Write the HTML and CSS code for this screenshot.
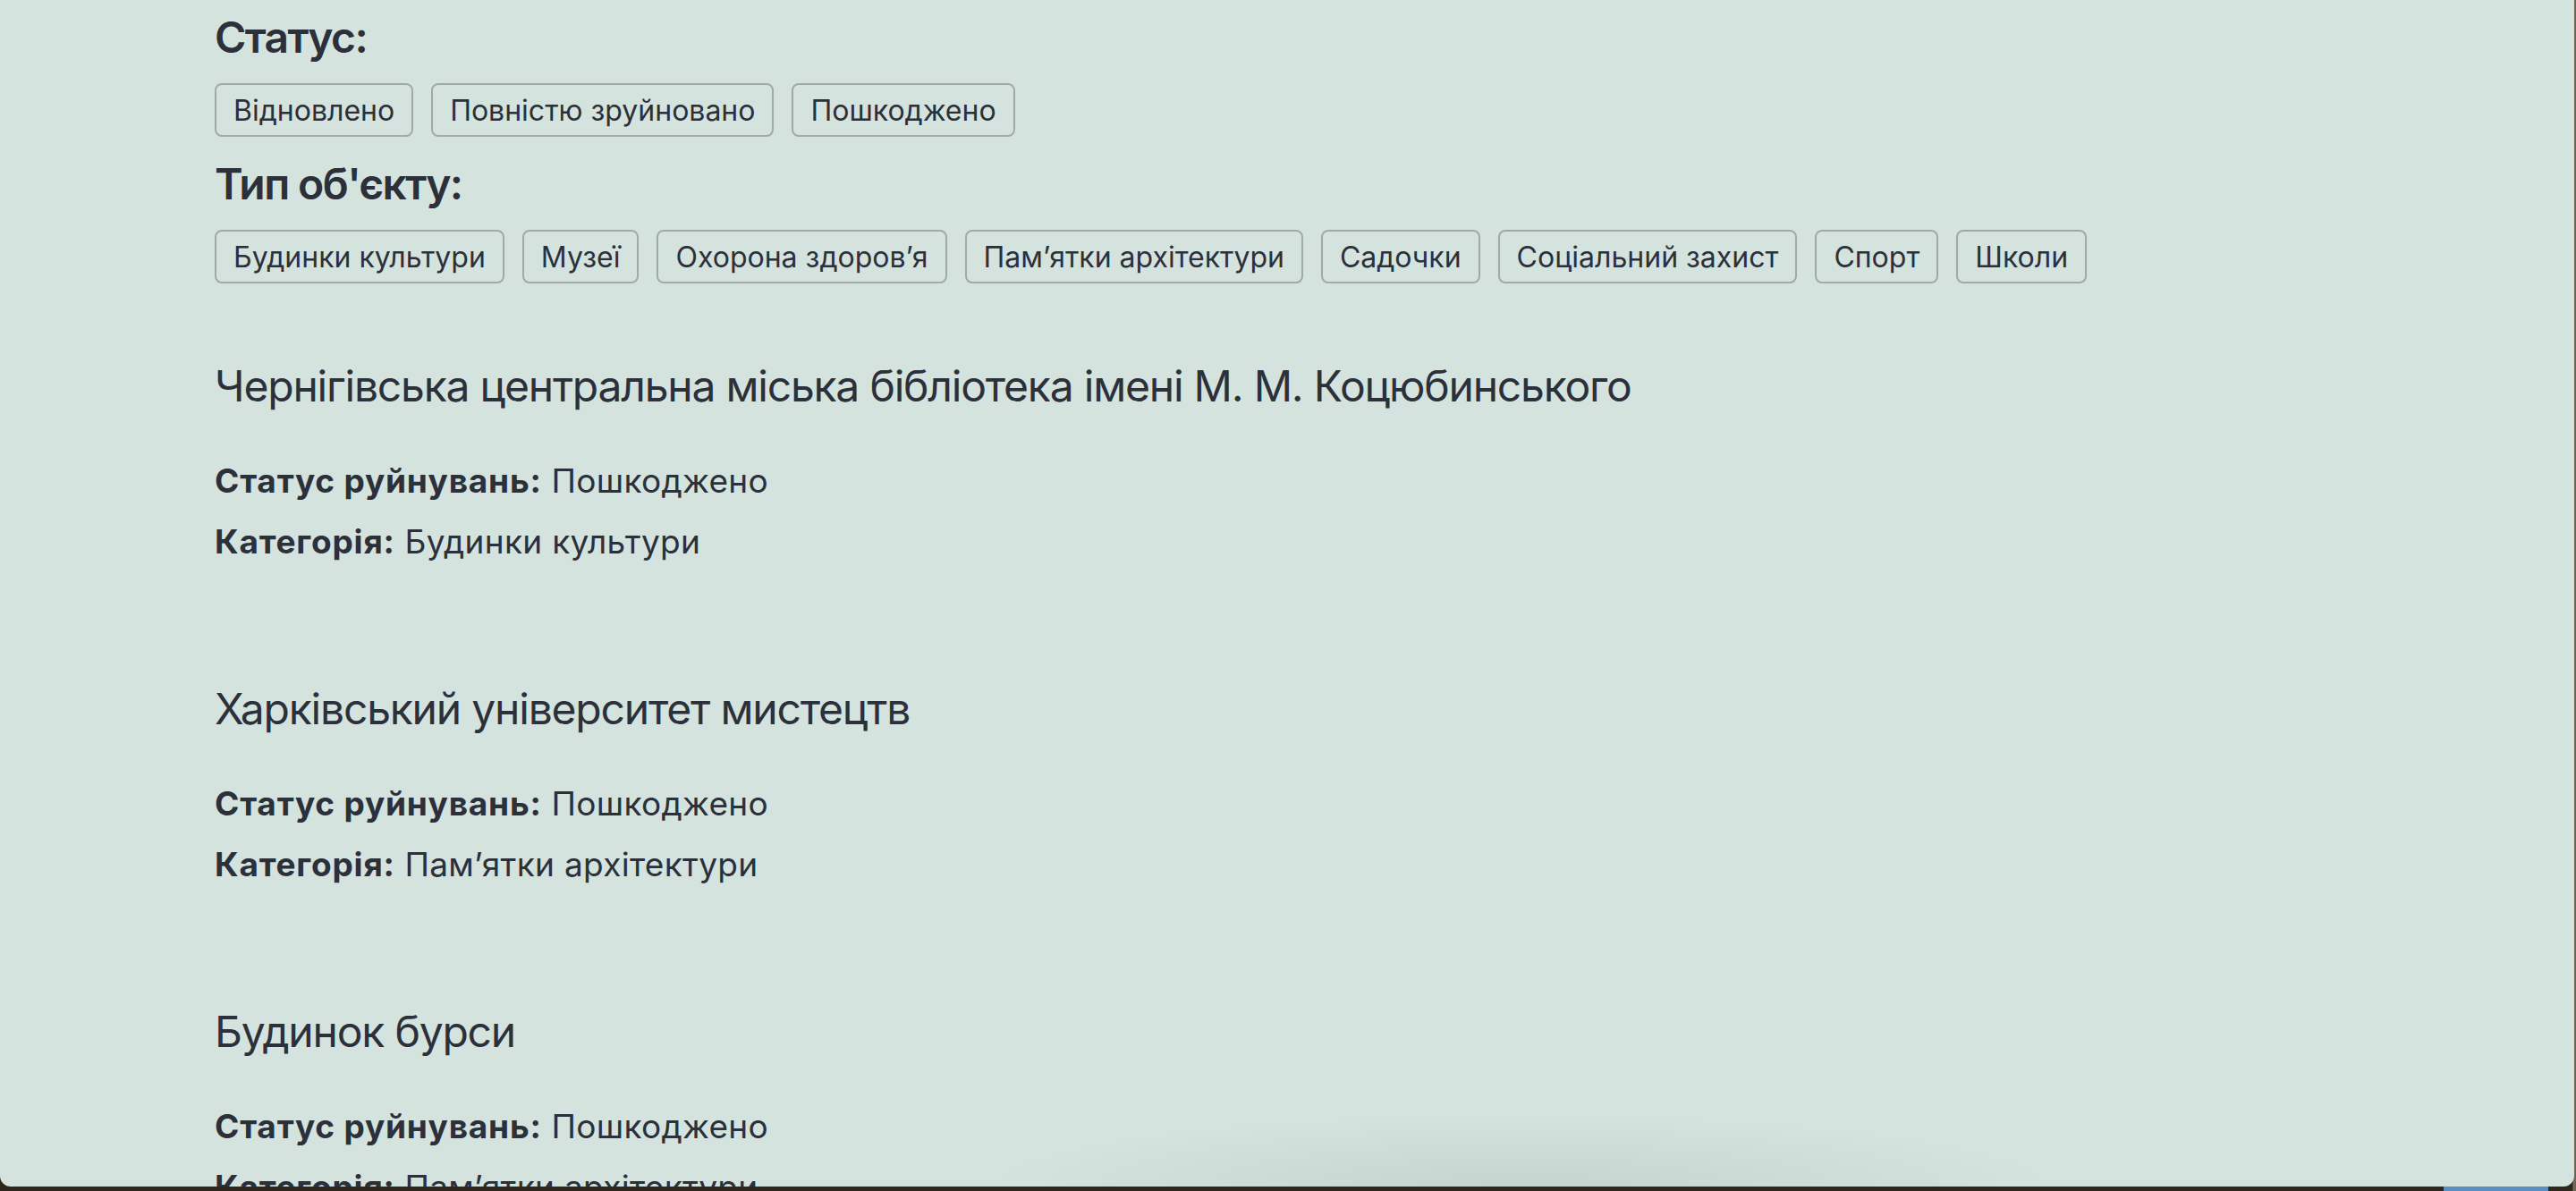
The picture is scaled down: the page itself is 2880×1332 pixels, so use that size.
FILE: index.html
```html
<!DOCTYPE html>
<html lang="uk">
<head>
<meta charset="utf-8">
<title>Об'єкти</title>
<link rel="stylesheet" href="styles.css">
</head>
<body>
<div class="desktop">
  <div class="window">
    <main class="content">
      <section class="filters">
        <h2 class="filter-title">Статус:</h2>
        <div class="chips">
          <button class="chip">Відновлено</button>
          <button class="chip">Повністю зруйновано</button>
          <button class="chip">Пошкоджено</button>
        </div>
        <h2 class="filter-title">Тип об'єкту:</h2>
        <div class="chips">
          <button class="chip">Будинки культури</button>
          <button class="chip">Музеї</button>
          <button class="chip">Охорона здоров’я</button>
          <button class="chip">Пам’ятки архітектури</button>
          <button class="chip">Садочки</button>
          <button class="chip">Соціальний захист</button>
          <button class="chip">Спорт</button>
          <button class="chip">Школи</button>
        </div>
      </section>
      <section class="list">
        <article class="entry">
          <h3 class="entry-title">Чернігівська центральна міська бібліотека імені М. М. Коцюбинського</h3>
          <p class="entry-line"><strong>Статус руйнувань:</strong> Пошкоджено</p>
          <p class="entry-line"><strong>Категорія:</strong> Будинки культури</p>
        </article>
        <article class="entry">
          <h3 class="entry-title">Харківський університет мистецтв</h3>
          <p class="entry-line"><strong>Статус руйнувань:</strong> Пошкоджено</p>
          <p class="entry-line"><strong>Категорія:</strong> Пам’ятки архітектури</p>
        </article>
        <article class="entry">
          <h3 class="entry-title">Будинок бурси</h3>
          <p class="entry-line"><strong>Статус руйнувань:</strong> Пошкоджено</p>
          <p class="entry-line"><strong>Категорія:</strong> Пам’ятки архітектури</p>
        </article>
      </section>
    </main>
    <div class="dock-shadow"></div>
  </div>
  <div class="dock-item"></div>
</div>
</body>
</html>
```

FILE: styles.css
```css
* { box-sizing: border-box; }

html, body {
  margin: 0;
  padding: 0;
  width: 2880px;
  height: 1332px;
  overflow: hidden;
}

body {
  background: #2d271e;
  font-family: Inter, "Noto Sans", sans-serif;
  color: #2b303b;
}

.desktop {
  position: relative;
  width: 2880px;
  height: 1332px;
  background: linear-gradient(90deg, #2d271e 0, #2d271e 2876px, #7b705f 2877px, #6a5f50 2880px);
}

.window {
  position: relative;
  width: 2878px;
  height: 1327px;
  background: #d4e3dd;
  border-radius: 0 0 12px 12px;
  overflow: hidden;
}

.content {
  padding: 13px 0 0 240px;
}

.filter-title {
  margin: 24px 0 22px;
  font-size: 48px;
  line-height: 58px;
  font-weight: 600;
  letter-spacing: -1.6px;
}

.filters .filter-title:first-child {
  margin-top: 0;
}

.chips {
  display: flex;
  flex-wrap: wrap;
  gap: 20px;
}

.chip {
  font-family: inherit;
  font-size: 32px;
  line-height: 40px;
  color: #2b303b;
  background: transparent;
  border: 2px solid #a1aaa6;
  border-radius: 8px;
  padding: 9px 19px 7px;
  margin: 0;
}

.list {
  margin-top: 86px;
}

.entry {
  padding-bottom: 124px;
}

.entry-title {
  margin: 0 0 43px;
  font-size: 48px;
  line-height: 58px;
  font-weight: 400;
  letter-spacing: -1.2px;
}

.entry-line {
  margin: 0;
  font-size: 37px;
  line-height: 68px;
  letter-spacing: 0.3px;
}

.entry-line strong {
  font-weight: 700;
  letter-spacing: 0.8px;
}

.dock-shadow {
  position: absolute;
  left: 1100px;
  bottom: 0;
  width: 1200px;
  height: 80px;
  background: radial-gradient(ellipse 50% 100% at 50% 100%, rgba(40, 60, 55, 0.09), rgba(40, 60, 55, 0) 100%);
  pointer-events: none;
}

.dock-item {
  position: absolute;
  left: 2732px;
  bottom: 0;
  width: 117px;
  height: 5px;
  background: #5a8ec0;
}
```
